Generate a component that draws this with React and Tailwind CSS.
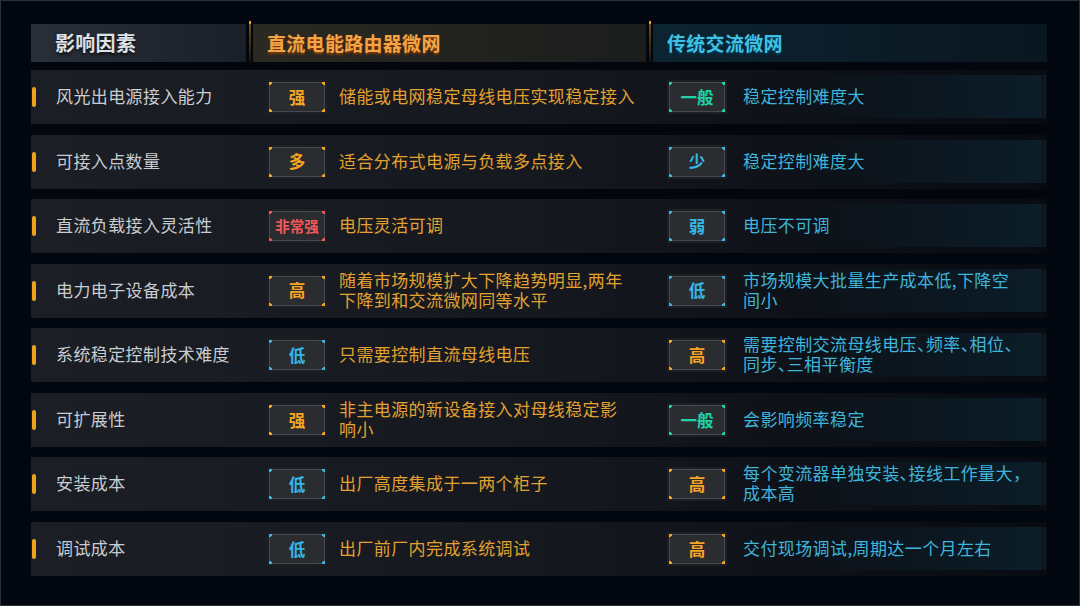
const font = { fontFamily: '"Noto Sans CJK SC", "Noto Sans", sans-serif' };

const tones = {
  orange: { text: "text-[#f5a524]", tick: "border-[#f5a524]" },
  red: { text: "text-[#f2585a]", tick: "border-[#f2585a]" },
  blue: { text: "text-[#35b8e6]", tick: "border-[#35b8e6]" },
  teal: { text: "text-[#1ed3a6]", tick: "border-[#1ed3a6]" },
};

const rows = [
  {
    label: "风光出电源接入能力",
    dc: { badge: "强", tone: "orange", text: ["储能或电网稳定母线电压实现稳定接入"] },
    ac: { badge: "一般", tone: "teal", text: ["稳定控制难度大"] },
  },
  {
    label: "可接入点数量",
    dc: { badge: "多", tone: "orange", text: ["适合分布式电源与负载多点接入"] },
    ac: { badge: "少", tone: "blue", text: ["稳定控制难度大"] },
  },
  {
    label: "直流负载接入灵活性",
    dc: { badge: "非常强", tone: "red", text: ["电压灵活可调"] },
    ac: { badge: "弱", tone: "blue", text: ["电压不可调"] },
  },
  {
    label: "电力电子设备成本",
    dc: { badge: "高", tone: "orange", text: ["随着市场规模扩大下降趋势明显,两年", "下降到和交流微网同等水平"] },
    ac: { badge: "低", tone: "blue", text: ["市场规模大批量生产成本低,下降空", "间小"] },
  },
  {
    label: "系统稳定控制技术难度",
    dc: { badge: "低", tone: "blue", text: ["只需要控制直流母线电压"] },
    ac: { badge: "高", tone: "orange", text: ["需要控制交流母线电压、频率、相位、", "同步、三相平衡度"] },
  },
  {
    label: "可扩展性",
    dc: { badge: "强", tone: "orange", text: ["非主电源的新设备接入对母线稳定影", "响小"] },
    ac: { badge: "一般", tone: "teal", text: ["会影响频率稳定"] },
  },
  {
    label: "安装成本",
    dc: { badge: "低", tone: "blue", text: ["出厂高度集成于一两个柜子"] },
    ac: { badge: "高", tone: "orange", text: ["每个变流器单独安装、接线工作量大，", "成本高"] },
  },
  {
    label: "调试成本",
    dc: { badge: "低", tone: "blue", text: ["出厂前厂内完成系统调试"] },
    ac: { badge: "高", tone: "orange", text: ["交付现场调试,周期达一个月左右"] },
  },
];

function Badge({ text, tone }) {
  const t = tones[tone];
  const small = text.length > 2;
  return (
    <div className="w-[60px] h-[34px] shrink-0 bg-[#1d1f23] p-[2px]">
      <div className="relative w-full h-full border border-[#45484e] bg-[#2a2c30] flex items-center justify-center">
        <span className={`absolute -top-px -left-px w-[3px] h-[3px] border-t-2 border-l-2 ${t.tick}`} />
        <span className={`absolute -top-px -right-px w-[3px] h-[3px] border-t-2 border-r-2 ${t.tick}`} />
        <span className={`absolute -bottom-px -left-px w-[3px] h-[3px] border-b-2 border-l-2 ${t.tick}`} />
        <span className={`absolute -bottom-px -right-px w-[3px] h-[3px] border-b-2 border-r-2 ${t.tick}`} />
        <span className={`font-bold leading-none ${small ? "text-[14.5px]" : "text-[16.5px]"} ${t.text}`}>{text}</span>
      </div>
    </div>
  );
}

function Sep() {
  return (
    <div className="w-[7px] -mt-[3px] h-[41px] flex justify-center">
      <div className="relative w-[2px] h-full bg-linear-to-b from-[#7a5416] to-[#1a1408]">
        <span className="absolute top-0 left-0 w-[2px] h-[3px] bg-[#f0a626]" />
      </div>
    </div>
  );
}

function Lines({ lines, color }) {
  return (
    <div className={`-mt-[2px] text-[17px] leading-[20px] tracking-[0.4px] whitespace-nowrap [font-feature-settings:'halt'] ${color}`}>
      {lines.map((l, i) => (
        <div key={i}>{l}</div>
      ))}
    </div>
  );
}

export default function App() {
  return (
    <div
      style={font}
      className="w-[1080px] h-[606px] bg-[#02060f] border border-[#2b3038] pt-[23px] pl-[30px] overflow-hidden"
    >
      <div className="w-[1016px]">
        <div className="flex h-[38px]">
          <div className="w-[215px] flex items-center pl-[24px] bg-linear-to-r from-[#292e37] to-[#1b1f28]">
            <span className="text-[20px] font-bold text-[#dde0e4] tracking-[0.3px] [text-shadow:0_2px_3px_rgba(0,0,0,0.7)]">
              影响因素
            </span>
          </div>
          <Sep />
          <div className="w-[393px] flex items-center pl-[14px] bg-linear-to-r from-[#2a2a22] to-[#1b1d1d]">
            <span className="text-[19px] font-bold text-[#f3a444] tracking-[0.3px] [text-shadow:0_2px_2px_rgba(150,60,0,0.8)]">
              直流电能路由器微网
            </span>
          </div>
          <Sep />
          <div className="w-[394px] flex items-center pl-[14px] bg-linear-to-r from-[#0c2431] to-[#0a1620]">
            <span className="text-[19px] font-bold text-[#3fc2e2] tracking-[0.3px] [text-shadow:0_2px_2px_rgba(0,60,90,0.9)]">
              传统交流微网
            </span>
          </div>
        </div>

        <div className="mt-[8px] flex flex-col gap-[10.57px]">
          {rows.map((r, i) => (
            <div
              key={i}
              className="relative flex items-center h-[54px] bg-linear-to-r from-[#1b1e24] via-[#15181e] to-[#080b11]"
            >
              <div className="absolute right-[5px] top-[5px] bottom-[6px] w-[260px] bg-linear-to-r from-transparent to-[#0c1e29]" />
              <div className="absolute right-[1px] top-[5px] bottom-[6px] w-[3px] bg-[#0d1b24]" />

              <div className="relative w-[222px] shrink-0 flex items-center">
                <span className="ml-px w-[4px] h-[20px] rounded-full bg-[#f0a21e]" />
                <span className="-mt-[2px] ml-[20px] text-[17px] leading-[20px] tracking-[0.4px] text-[#c9ccd1] whitespace-nowrap">
                  {r.label}
                </span>
              </div>

              <div className="relative w-[400px] shrink-0 flex items-center pl-[14px] gap-[12px]">
                <Badge text={r.dc.badge} tone={r.dc.tone} />
                <Lines lines={r.dc.text} color="text-[#e3a130]" />
              </div>

              <div className="relative flex-1 flex items-center pl-[14px] gap-[16px]">
                <Badge text={r.ac.badge} tone={r.ac.tone} />
                <Lines lines={r.ac.text} color="text-[#3fb5dc]" />
              </div>
            </div>
          ))}
        </div>
      </div>
    </div>
  );
}
